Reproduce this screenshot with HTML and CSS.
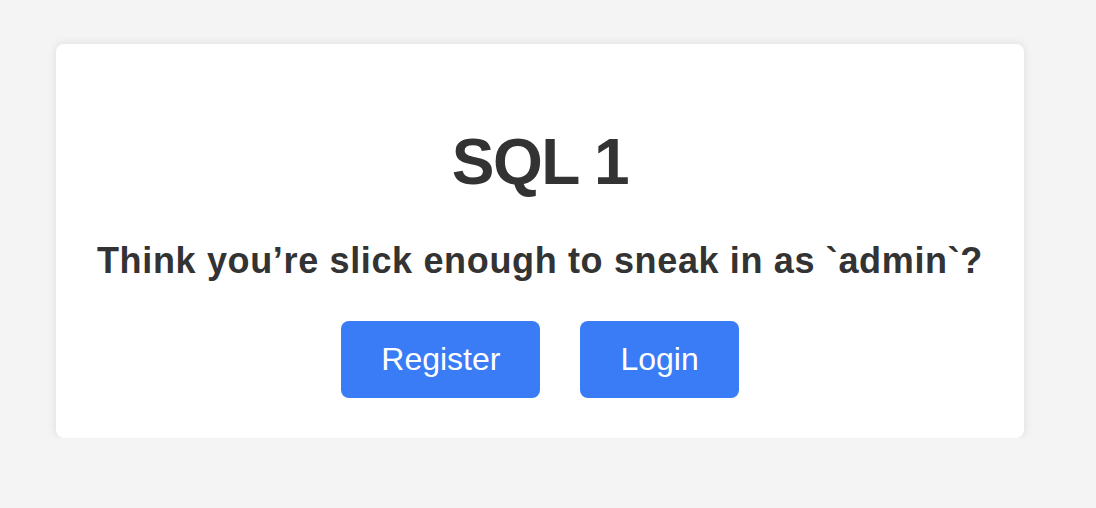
FILE: index.html
```html
<!DOCTYPE html>
<html lang="en">
<head>
<meta charset="utf-8">
<title>SQL 1</title>
<link rel="stylesheet" href="styles.css">
</head>
<body>
<div class="page">
  <main class="card">
    <h1 class="title">SQL 1</h1>
    <h2 class="subtitle">Think you’re slick enough to sneak in as `admin`?</h2>
    <div class="actions">
      <a class="btn" href="#">Register</a>
      <a class="btn" href="#">Login</a>
    </div>
  </main>
</div>
</body>
</html>
```

FILE: styles.css
```css
html, body {
  margin: 0;
  padding: 0;
  background: #f4f4f4;
  font-family: "Liberation Sans", Arial, sans-serif;
  color: #333333;
}

.page {
  padding: 44px 0 0 56px;
}

.card {
  box-sizing: border-box;
  width: 968px;
  height: 394px;
  background: #ffffff;
  border-radius: 8px;
  box-shadow: 0 0 10px rgba(0, 0, 0, 0.1);
  padding: 40px;
  display: flex;
  flex-direction: column;
  align-items: center;
}

.title {
  margin: 42px 0 0;
  font-size: 64px;
  font-weight: bold;
  line-height: 72px;
  letter-spacing: -1.5px;
}

.subtitle {
  margin: 43px 0 0;
  font-size: 36px;
  font-weight: bold;
  line-height: 40px;
  letter-spacing: 0.65px;
}

.actions {
  margin-top: 40px;
  display: flex;
  gap: 40px;
}

.btn {
  display: block;
  background: #3a7bf6;
  color: #ffffff;
  text-decoration: none;
  font-size: 32px;
  line-height: 37px;
  padding: 20px 40px;
  border-radius: 8px;
}
```
